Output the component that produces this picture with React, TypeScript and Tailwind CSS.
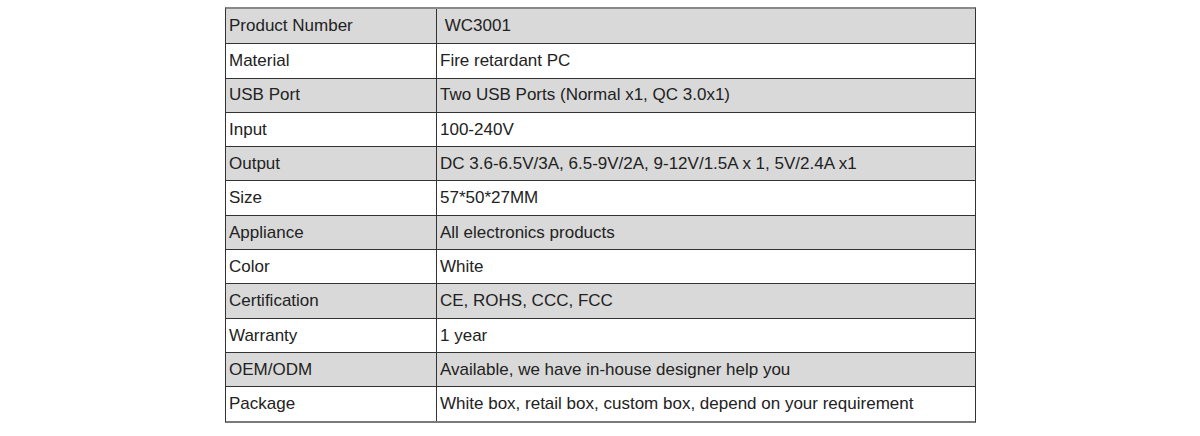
import React from "react";

const rows: [string, string][] = [
  ["Product Number", " WC3001"],
  ["Material", "Fire retardant PC"],
  ["USB Port", "Two USB Ports (Normal x1, QC 3.0x1)"],
  ["Input", "100-240V"],
  ["Output", "DC 3.6-6.5V/3A, 6.5-9V/2A, 9-12V/1.5A x 1, 5V/2.4A x1"],
  ["Size", "57*50*27MM"],
  ["Appliance", "All electronics products"],
  ["Color", "White"],
  ["Certification", "CE, ROHS, CCC, FCC"],
  ["Warranty", "1 year"],
  ["OEM/ODM", "Available, we have in-house designer help you"],
  ["Package", "White box, retail box, custom box, depend on your requirement"],
];

export default function App() {
  return (
    <div className="w-[1200px] h-[436px] bg-white pt-[7px] pl-[225px]" style={{ fontFamily: '"Liberation Sans", Arial, sans-serif' }}>
      <div className="w-[751px] flex flex-col border-t-2 border-b-2 border-t-[#8a8a8a] border-b-[#7a7a7a] border-l border-r border-l-[#333] border-r-[#333]">
        {rows.map(([k, v], i) => (
          <div
            key={k}
            className={`flex h-[34.3px] text-[17px] text-[#222] ${i > 0 ? "border-t border-[#333]" : ""} ${i % 2 === 0 ? "bg-[#d9d9d9]" : "bg-white"}`}
          >
            <div className="w-[211px] shrink-0 border-r border-[#333] pl-[3px] flex items-center whitespace-pre">{k}</div>
            <div className="flex-1 pl-[3px] flex items-center whitespace-pre">{v}</div>
          </div>
        ))}
      </div>
    </div>
  );
}
